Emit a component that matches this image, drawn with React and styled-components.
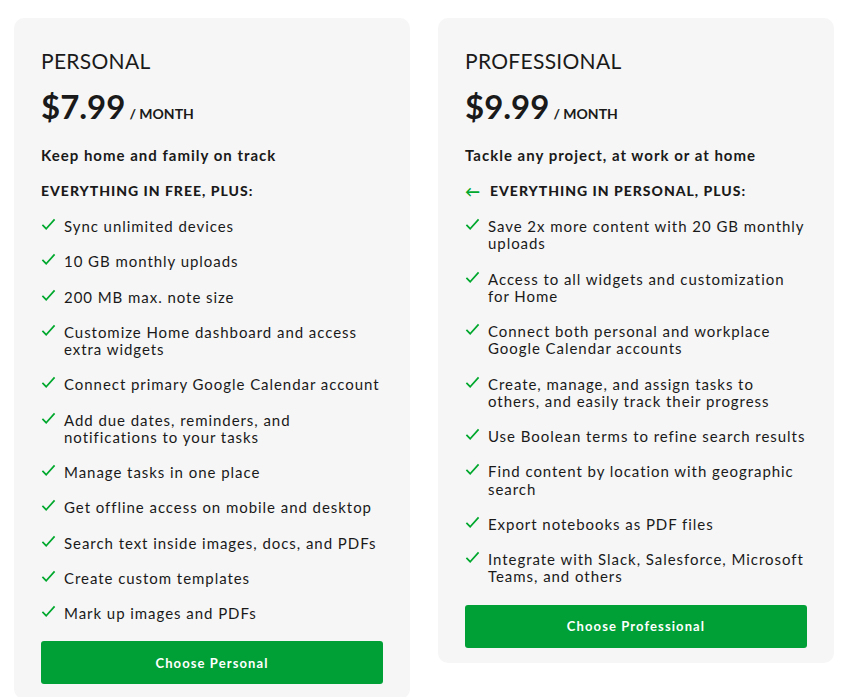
import React from "react";
import styled, { createGlobalStyle } from "styled-components";

const GlobalStyle = createGlobalStyle`
  html, body {
    margin: 0;
    padding: 0;
    background: #fff;
  }
  body {
    font-family: Lato, "Liberation Sans", sans-serif;
    color: #1a1a1a;
  }
`;

const Page = styled.div`
  display: flex;
  align-items: flex-start;
  gap: 28px;
  padding: 18px 16px 0 14px;
`;

const Card = styled.div`
  width: 396px;
  box-sizing: border-box;
  background: #f6f6f6;
  border-radius: 10px;
  padding: 29px 27px 15px;
`;

const PlanName = styled.h2`
  margin: 0;
  font-size: 21px;
  font-weight: 400;
  line-height: 28px;
  letter-spacing: 0.3px;
`;

const PriceRow = styled.div`
  display: flex;
  align-items: baseline;
  margin-top: 11px;
  gap: 4px;
`;

const Price = styled.span`
  font-size: 33px;
  font-weight: 700;
  line-height: 40px;
`;

const Per = styled.span`
  font-size: 14px;
  font-weight: 700;
`;

const Tagline = styled.p`
  margin: 19px 0 0;
  font-size: 15px;
  font-weight: 700;
  letter-spacing: 1px;
  line-height: 20px;
`;

const Includes = styled.div`
  display: flex;
  align-items: center;
  gap: 9px;
  margin-top: 16px;
  font-size: 14px;
  font-weight: 900;
  letter-spacing: 1px;
  line-height: 20px;
`;

const Arrow = styled.span`
  color: #00a82d;
  font-size: 15px;
  font-weight: 700;
`;

const List = styled.ul`
  list-style: none;
  margin: 17px 0 0;
  padding: 0;
  display: flex;
  flex-direction: column;
  gap: 18px;
`;

const Item = styled.li`
  display: flex;
  align-items: flex-start;
  gap: 8px;
  font-size: 15px;
  line-height: 1.15;
  letter-spacing: 0.95px;
`;

const Check = styled.svg`
  flex: none;
  width: 15px;
  height: 15px;
  margin-top: -1px;
`;

const ChooseButton = styled.button`
  display: block;
  width: 100%;
  height: 43px;
  margin-top: 19px;
  border: none;
  border-radius: 3px;
  background: #00a036;
  color: #fff;
  font-family: Lato, "Liberation Sans", sans-serif;
  font-size: 13px;
  font-weight: 700;
  letter-spacing: 1.1px;
  cursor: pointer;
`;

const CheckIcon = () => (
  <Check viewBox="0 0 16 16">
    <path d="M1.5 8.5 L5.5 12.5 L14.5 2.5" fill="none" stroke="#00a82d" strokeWidth="1.8" />
  </Check>
);

const plans = [
  {
    name: "PERSONAL",
    price: "$7.99",
    tagline: "Keep home and family on track",
    includes: "EVERYTHING IN FREE, PLUS:",
    arrow: false,
    button: "Choose Personal",
    features: [
      "Sync unlimited devices",
      "10 GB monthly uploads",
      "200 MB max. note size",
      "Customize Home dashboard and access extra widgets",
      "Connect primary Google Calendar account",
      "Add due dates, reminders, and notifications to your tasks",
      "Manage tasks in one place",
      "Get offline access on mobile and desktop",
      "Search text inside images, docs, and PDFs",
      "Create custom templates",
      "Mark up images and PDFs",
    ],
  },
  {
    name: "PROFESSIONAL",
    price: "$9.99",
    tagline: "Tackle any project, at work or at home",
    includes: "EVERYTHING IN PERSONAL, PLUS:",
    arrow: true,
    button: "Choose Professional",
    features: [
      "Save 2x more content with 20 GB monthly uploads",
      "Access to all widgets and customization for Home",
      "Connect both personal and workplace Google Calendar accounts",
      "Create, manage, and assign tasks to others, and easily track their progress",
      "Use Boolean terms to refine search results",
      "Find content by location with geographic search",
      "Export notebooks as PDF files",
      "Integrate with Slack, Salesforce, Microsoft Teams, and others",
    ],
  },
];

const App = () => {
  return (
    <>
      <GlobalStyle />
      <Page>
        {plans.map((plan) => (
          <Card key={plan.name}>
            <PlanName>{plan.name}</PlanName>
            <PriceRow>
              <Price>{plan.price}</Price>
              <Per>/ MONTH</Per>
            </PriceRow>
            <Tagline>{plan.tagline}</Tagline>
            <Includes>
              {plan.arrow && <Arrow>←</Arrow>}
              {plan.includes}
            </Includes>
            <List>
              {plan.features.map((f) => (
                <Item key={f}>
                  <CheckIcon />
                  <span>{f}</span>
                </Item>
              ))}
            </List>
            <ChooseButton>{plan.button}</ChooseButton>
          </Card>
        ))}
      </Page>
    </>
  );
};

export default App;
